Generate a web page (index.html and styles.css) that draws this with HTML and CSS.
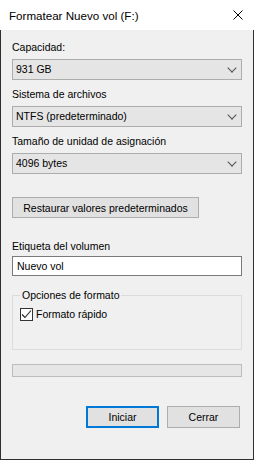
FILE: index.html
```html
<!DOCTYPE html>
<html lang="es">

<head>
    <meta charset="UTF-8">
    <meta name="viewport" content="width=device-width, initial-scale=1">
    <title>Formatear Nuevo vol (F:)</title>
    <link rel="stylesheet" href="styles.css">
</head>

<body>
    <div class="window">
        <div class="titlebar">
            <span class="title">Formatear Nuevo vol (F:)</span>
            <svg class="close" width="10" height="10" viewBox="0 0 10 10">
                <path d="M0.5 0.5 L9.5 9.5 M9.5 0.5 L0.5 9.5" stroke="#000" stroke-width="1" fill="none" />
            </svg>
        </div>

        <div class="content">
            <div class="field">
                <label>Capacidad:</label>
                <div class="select">931 GB<span class="arrow"></span></div>
            </div>

            <div class="field">
                <label>Sistema de archivos</label>
                <div class="select">NTFS (predeterminado)<span class="arrow"></span></div>
            </div>

            <div class="field">
                <label>Tamaño de unidad de asignación</label>
                <div class="select">4096 bytes<span class="arrow"></span></div>
            </div>

            <button class="btn restore">Restaurar valores predeterminados</button>

            <div class="field volume">
                <label>Etiqueta del volumen</label>
                <div class="textbox">Nuevo vol</div>
            </div>

            <fieldset class="group">
                <legend>Opciones de formato</legend>
                <div class="check-row">
                    <span class="checkbox">
                        <svg width="11" height="11" viewBox="0 0 11 11">
                            <path d="M1 5.5 L4 8.5 L10 1.5" stroke="#222" stroke-width="1.1" fill="none" />
                        </svg>
                    </span>
                    Formato rápido
                </div>
            </fieldset>

            <div class="progress"></div>

            <div class="actions">
                <button class="btn default">Iniciar</button>
                <button class="btn">Cerrar</button>
            </div>
        </div>
    </div>
</body>

</html>
```

FILE: styles.css
```css
body {
    margin: 0;
    padding: 0;
    font-family: "Liberation Sans", Arial, sans-serif;
    font-size: 10.5px;
    color: #000;
    background: #f0f0f0;
}

.window {
    width: 254px;
    height: 460px;
    display: flex;
    flex-direction: column;
}

.titlebar {
    height: 30px;
    background: #fff;
    display: flex;
    align-items: center;
    justify-content: space-between;
    padding: 0 11px 0 9px;
    flex-shrink: 0;
}

.title {
    font-size: 11.6px;
    line-height: 15px;
}

.close {
    display: block;
    margin-top: -1px;
}

.content {
    flex: 1;
    background: #f0f0f0;
    border: 1px solid #2f2f2f;
    border-top: none;
    padding: 10px 11px 0;
}

.field {
    margin-bottom: 7px;
}

label {
    display: block;
    line-height: 15px;
    margin-bottom: 4px;
}

.select {
    position: relative;
    height: 19px;
    line-height: 19px;
    padding-left: 3px;
    background: #e5e5e5;
    border: 1px solid #adadad;
}

.arrow {
    position: absolute;
    right: 6px;
    top: 5px;
    width: 5px;
    height: 5px;
    border-right: 1px solid #555;
    border-bottom: 1px solid #555;
    transform: rotate(45deg) scale(1.1, 1.1);
}

.btn {
    font-family: inherit;
    font-size: 10.5px;
    color: #000;
    background: #e1e1e1;
    border: 1px solid #adadad;
    height: 22px;
    padding: 0;
    line-height: 18px;
}

.restore {
    display: block;
    margin-top: 23px;
    width: 187px;
    height: 21px;
}

.volume {
    margin-top: 21px;
    margin-bottom: 0;
}

.volume label {
    margin-bottom: 2px;
}

.textbox {
    height: 18px;
    line-height: 18px;
    padding-left: 4px;
    background: #fff;
    border: 1px solid #7a7a7a;
}

.group {
    margin: 12px 0 0;
    padding: 0 7px 27px;
    border: 1px solid #dcdcdc;
}

.group legend {
    padding: 0 2px;
    line-height: 15px;
}

.check-row {
    display: flex;
    align-items: center;
    gap: 3px;
    margin-top: 4px;
    line-height: 15px;
}

.checkbox {
    width: 11px;
    height: 11px;
    background: #fff;
    border: 1px solid #333;
    display: flex;
}

.progress {
    margin-top: 14px;
    height: 11px;
    background: #e6e6e6;
    border: 1px solid #bcbcbc;
}

.actions {
    display: flex;
    justify-content: flex-end;
    gap: 8px;
    margin-top: 29px;
    padding-right: 2px;
}

.actions .btn {
    width: 73px;
}

.btn.default {
    border: 2px solid #0078d7;
}
```
